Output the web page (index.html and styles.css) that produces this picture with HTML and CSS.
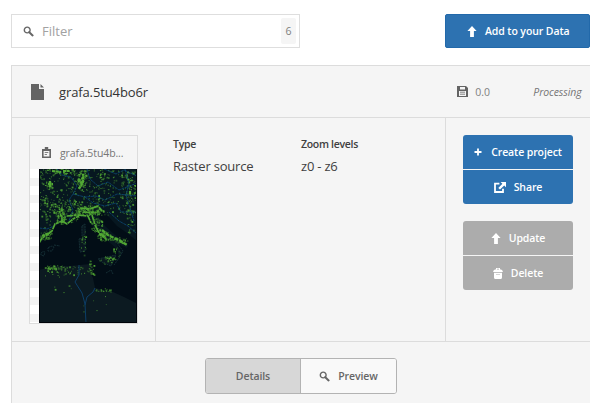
FILE: index.html
```html
<!DOCTYPE html>
<html lang="en">
<head>
<meta charset="utf-8">
<title>Data</title>
<link rel="stylesheet" href="styles.css">
</head>
<body>
<svg class="defs" width="0" height="0">
  <symbol id="search" viewBox="0 0 11 11"><circle cx="4.2" cy="4" r="2.9" fill="none" stroke="currentColor" stroke-width="1.4"/><path d="M6.3 6.3 9.6 9.4" stroke="currentColor" stroke-width="2" stroke-linecap="round"/></symbol>
  <symbol id="up" viewBox="0 0 10 11"><path d="M5 0 9.6 4.9H6.9V11H3.1V4.9H.4Z" fill="currentColor"/></symbol>
</svg>
<header class="top">
  <label class="filter"><svg class="i11"><use href="#search"/></svg><span>Filter</span><b class="count">6</b></label>
  <a class="btn add"><svg class="up"><use href="#up"/></svg><span>Add to your Data</span></a>
</header>
<main class="panel">
  <div class="title-row">
    <svg class="doc" viewBox="0 0 13 16"><path d="M0 0H8V5H13V16H0ZM9.5 0 13 3.5H9.5Z" fill="currentColor"/></svg>
    <h1>grafa.5tu4bo6r</h1>
    <svg class="disk" viewBox="0 0 11 11"><path fill-rule="evenodd" d="M0 0H9L11 2V11H0ZM3 1V3.5H8V1ZM2 5V10H9V5Z" fill="currentColor"/><path d="M3 6.2H8M3 8.2H8" stroke="currentColor" stroke-width=".8"/></svg>
    <span class="size">0.0</span>
    <em>Processing</em>
  </div>
  <div class="body">
    <div class="thumb-col">
      <div class="thumb">
        <div class="thumb-head"><svg class="clip" viewBox="0 0 9 11"><path fill-rule="evenodd" d="M0 2H2.8V0H6.2V2H9V11H0ZM1.6 4V9.4H7.4V4Z" fill="currentColor"/><path d="M2.7 5.5H6.3M2.7 7.5H5" stroke="currentColor" stroke-width=".8"/></svg><span>grafa.5tu4b...</span></div>
        <div class="map-wrap">
          <svg class="map" viewBox="0 0 98 154">
            <rect width="98" height="154" fill="#020d16"/>
            <path d="M0 0H98V72L88 64 78 57 70 48 62 42 59 46 66 57 76 66 89 76 88 79 77 74 83 84 80 88 78 80 70 73 62 67 54 58 49 50 41 48 35 50 29 55 23 53 15 58 8 68 0 75Z" fill="#071720"/>
            <path d="M0 101 16 97 31 97 51 95 54 99 51 103 54 109 56 119 65 121 74 123 85 128 97 134V154H0Z" fill="#0c1a21"/>
            <path d="M42 58 46 54 47 65 43 67ZM40 69 47 69 46 83 41 83ZM59 90 77 86 72 97Z" fill="#09171f"/>
            <g class="isles"><path d="M43 57 46 55 46 65 43 67ZM40 70 46 69 46 82 41 83ZM59 90 77 86 72 97 63 93ZM2 84q2-2 4-1l-1 4-3-1ZM9 79q4-3 6-1l-2 4-4 0ZM15 76l6 1M78 74 84 82 80 89 75 96M67 104l5-3 2 4"/></g>
            <g id="lights" fill="#52a834"></g>
            <g class="rivers"><path d="M18 0 23 6 32 8 38 17 34 25 30 31 34 41 30 52"/><path d="M48 0 51 10 59 17 69 13 80 21 98 14"/><path d="M34 25 46 28 57 27 66 31 78 25 98 27"/><path d="M46 28 54 34 66 37 77 34 82 43 98 43"/><path d="M65 0 77 5 85 1 98 7M86 0 90 15 87 26 91 39 95 52M0 59 8 60 15 57M70 43 80 52 89 57 97 64"/></g>
            <path class="border" d="M40 96V106L36 113 43 124 46 135 47 154M56 119 54 123 48 128 46 136"/>
            <g class="coast"><path d="M0 74 3 69 8 66 13 62 16 55 23 52 28 55 34 50 40 47"/><path d="M53 46 56 56 60 64 66 68"/><path d="M63 61 69 66 75 69 80 71 88 76"/><path d="M23 54V49L21 44M28 47 40 46 49 47 52 54"/><path d="M41 39 51 40 59 37 63 42M45 43 55 44"/></g>
            <path d="M40 20 44 13V5M44 14 39 12M9 15h5M11 12v6M13 2 22 3M24 2h7M91 22v4M3 67 10 64M60 65 67 69" class="cities"/>
            <path d="M.5 0V153.5H97.5V0" fill="none" stroke="#00040a"/>
          </svg>
        </div>
      </div>
    </div>
    <dl class="info">
      <div><dt>Type</dt><dd>Raster source</dd></div>
      <div><dt>Zoom levels</dt><dd>z0 - z6</dd></div>
    </dl>
    <div class="actions">
      <div class="group">
        <a class="btn create"><svg class="plus" viewBox="0 0 8 8"><path d="M4 .5V7.5M.5 4H7.5" stroke="currentColor" stroke-width="1.8"/></svg><span>Create project</span></a>
        <a class="btn"><svg class="share" viewBox="0 0 12 11"><path d="M5.4 1.6H1V10H9V6.8" fill="none" stroke="currentColor" stroke-width="1.8"/><path d="M6.6 0H12V5.2L10.2 3.5 6 7.6 4.3 6 8.4 1.8Z" fill="currentColor"/></svg><span>Share</span></a>
      </div>
      <div class="group grey">
        <a class="btn"><svg class="up"><use href="#up"/></svg><span>Update</span></a>
        <a class="btn"><svg class="bin" viewBox="0 0 10 11"><path fill-rule="evenodd" d="M0 4Q.3 1.5 3 1.3V0H7V1.3Q9.7 1.5 10 4ZM4 .8V1.4H6V.8ZM1 4.8H9V9.5Q9 11 7.5 11H2.5Q1 11 1 9.5ZM3 6.2V6.8H7V6.2Z" fill="currentColor"/></svg><span>Delete</span></a>
      </div>
    </div>
  </div>
  <footer><div class="tabs"><a class="tab on">Details</a><a class="tab"><svg class="i11"><use href="#search"/></svg><span>Preview</span></a></div></footer>
</main>
<script src="map.js"></script>
</body>
</html>
```
FILE: styles.css
```css
* { box-sizing: border-box; }
body { margin: 0; width: 600px; height: 403px; overflow: hidden; background: #fff; font-family: "Open Sans", sans-serif; font-size: 13px; color: #404040; }
svg { display: block; flex: none; }
.defs { position: absolute; }
.top { display: flex; justify-content: space-between; padding: 14px 10.5px 0 11px; height: 65px; }
.filter { display: flex; align-items: center; width: 289px; height: 34px; border: 1px solid #dedede; padding: 0 3px 0 11px; color: #666; }
.filter span { margin-left: 8px; flex: 1; color: #a2a2a2; }
.i11 { width: 11px; height: 11px; }
.count { width: 15px; height: 26px; line-height: 26px; background: #f5f5f5; border-radius: 2px; text-align: center; font-weight: 400; font-size: 10.5px; color: #808080; }
.btn { display: flex; align-items: center; justify-content: center; gap: 8px; flex: 1; background: #2d72b1; color: #fff; font-size: 10.5px; letter-spacing: -.1px; font-weight: 600; white-space: nowrap; }
.add { flex: none; height: 34px; width: 144.5px; padding-left: 2px; border-radius: 2px; border: 1px solid #2269aa; }
.add span { margin-top: -1px; }
.up { width: 10px; height: 11px; }
.panel { margin-left: 11px; width: 579px; height: 338px; background: #f5f5f5; border: solid #dcdcdc; border-width: 1px 0 0 1px; }
.title-row { display: flex; align-items: center; height: 51px; padding: 0 8.5px 0 19px; color: #646464; }
.doc { width: 13px; height: 16px; }
h1 { margin: 0 0 0 15px; flex: 1; font-size: 13px; letter-spacing: -.12px; font-weight: 400; color: #333; }
.disk { width: 11px; height: 11px; }
.size { margin-left: 7px; width: 58px; font-size: 10.5px; color: #808080; }
em { font-size: 10.5px; letter-spacing: -.1px; color: #757575; }
.body { display: flex; height: 225px; border: solid #dcdcdc; border-width: 1px 0; }
.thumb-col { width: 144px; border-right: 1px solid #dcdcdc; padding: 17px 0 0 17px; }
.thumb { width: 109px; height: 189px; border: 1px solid #dcdcdc; }
.thumb-head { display: flex; align-items: center; height: 33px; padding-left: 12px; color: #666; font-size: 10.5px; }
.thumb-head span { margin-left: 9px; color: #777; letter-spacing: -.1px; }
.clip { width: 9px; height: 11px; }
.map-wrap { display: flex; justify-content: flex-end; height: 154px; background: repeating-linear-gradient(#fff 0 9px, #f3f3f3 9px 17px); }
.map { width: 98px; height: 154px; }
.coast path { fill: none; stroke: #52a834; stroke-width: 1.7; stroke-dasharray: 6 .5 3 .8 9 .7; }
.coast path:nth-child(3) { stroke-width: 2.4; stroke-dasharray: 4 1; }
.rivers path { fill: none; stroke: #0a4672; stroke-width: 1; stroke-dasharray: 3 .7; opacity: .85; }
.border { fill: none; stroke: #0c3e68; stroke-width: 1; }
.isles path { fill: none; stroke: #152f35; stroke-width: 1; stroke-dasharray: 2 .8; }
.cities { fill: none; stroke: #52a834; stroke-width: 2.2; stroke-dasharray: 3 .6; }
.info { display: flex; margin: 0; width: 290px; padding: 18px 0 0 17px; border-right: 1px solid #dcdcdc; }
.info div { width: 128px; }
dt { font-size: 10.5px; letter-spacing: -.3px; line-height: 17px; font-weight: 600; }
dd { margin: 4px 0 0; font-size: 13px; letter-spacing: -.2px; line-height: 19px; }
.actions { padding: 17px 0 0 17px; }
.group { display: flex; flex-direction: column; gap: 1px; width: 110px; height: 69px; margin-bottom: 17px; border-radius: 3px; overflow: hidden; }
.grey .btn { background: #acacac; }
.create { gap: 9px; }
.plus { width: 8px; height: 8px; }
.share { width: 12px; height: 11px; }
.bin { width: 10px; height: 11px; }
footer { display: flex; justify-content: center; padding-top: 16px; }
.tabs { display: flex; width: 192px; height: 36px; border: 1px solid #b3b3b3; border-radius: 3px; overflow: hidden; }
.tab { flex: 1; display: flex; align-items: center; justify-content: center; gap: 8px; font-size: 10.5px; letter-spacing: -.1px; font-weight: 600; color: #666; background: #f9f9f9; }
.tab.on { flex: none; width: 95px; background: #d7d7d7; border-right: 1px solid #b3b3b3; }
```
FILE: map.js
```javascript
// Scatters settlement lights around population centres: [cx, cy, rx, ry, count]
const areas = [
  [49, 24, 50, 25, 480], [8, 42, 12, 25, 45], [30, 42, 16, 12, 110],
  [42, 12, 5, 10, 65], [10, 16, 4, 5, 30], [25, 2, 22, 3, 45],
  [50, 41, 14, 5, 150], [22, 48, 5, 7, 50], [7, 66, 7, 5, 40],
  [57, 55, 6, 8, 60], [65, 67, 7, 5, 80], [80, 71, 9, 3, 35],
  [89, 22, 8, 23, 75], [90, 56, 6, 8, 15], [44, 73, 3, 14, 18],
  [68, 91, 9, 4, 28], [77, 84, 4, 7, 16], [15, 98, 10, 2, 30],
  [27, 101, 22, 5, 50], [52, 101, 3, 11, 25], [65, 121, 10, 2, 20],
  [20, 112, 20, 13, 9], [68, 137, 27, 13, 6]
];
let seed = 29;
function rnd() {
  seed = (seed * 16807) % 2147483647;
  return seed / 2147483647;
}
const group = document.getElementById("lights");
for (const [cx, cy, rx, ry, count] of areas) {
  for (let i = 0; i < count; i++) {
    const angle = rnd() * Math.PI * 2;
    const r = Math.sqrt(rnd());
    const square = rx === 50;
    const x = square ? rnd() * 98 : cx + Math.cos(angle) * rx * r;
    const y = square ? rnd() * 47 : cy + Math.sin(angle) * ry * r;
    const dot = document.createElementNS("http://www.w3.org/2000/svg", "rect");
    const s = rnd() > 0.84 ? 1.8 : 1;
    dot.setAttribute("x", x.toFixed(1));
    dot.setAttribute("y", y.toFixed(1));
    dot.setAttribute("width", s);
    dot.setAttribute("height", s);
    dot.setAttribute("opacity", (0.35 + rnd() * 0.6).toFixed(2));
    group.appendChild(dot);
  }
}
```
